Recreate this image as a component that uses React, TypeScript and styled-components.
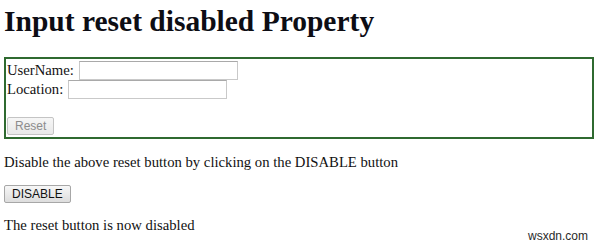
import React from "react";
import styled, { createGlobalStyle } from "styled-components";

const Global = createGlobalStyle`
  html, body { margin: 0; padding: 0; background: #ffffff; }
  body { font-family: "Liberation Serif", "Times New Roman", serif; color: #111111; }
`;

const Page = styled.div`
  position: relative;
  width: 600px;
  height: 246px;
  box-sizing: border-box;
  padding: 4px 6px 0 4px;
  overflow: hidden;
`;

const Heading = styled.h1`
  margin: 0 0 19px 0;
  font-size: 29.5px;
  line-height: 34px;
  font-weight: bold;
  color: #0d0d14;
`;

const FormBox = styled.form`
  margin: 0;
  border: 2px solid #2f6a30;
  padding: 2px 1px;
  display: flex;
  flex-direction: column;
  align-items: flex-start;
`;

const Row = styled.div`
  display: flex;
  align-items: center;
  height: 19px;
  font-size: 14.7px;
  line-height: 17px;
`;

const Label = styled.label`
  margin-right: 5px;
`;

const TextInput = styled.input`
  box-sizing: border-box;
  width: 159px;
  height: 19px;
  margin: 0;
  padding: 0 2px;
  border: 1px solid #c9c9c9;
  border-top-color: #a9a9a9;
  background: #ffffff;
  font: 13px "Liberation Sans", Arial, sans-serif;
`;

const Spacer = styled.div`
  height: 18px;
`;

const Button = styled.button<{ $off?: boolean }>`
  box-sizing: border-box;
  height: 18px;
  margin: 0;
  padding: 0 7px;
  font-family: "Liberation Sans", Arial, sans-serif;
  font-size: 12px;
  line-height: 16px;
  border-radius: 2px;
  border: 1px solid ${(p) => (p.$off ? "#c4c4c4" : "#a7a7a7")};
  color: ${(p) => (p.$off ? "#8c8c8c" : "#111111")};
  background: ${(p) =>
    p.$off
      ? "linear-gradient(#f6f6f6, #e9e9e9)"
      : "linear-gradient(#f7f7f7, #dddddd)"};
`;

const Para = styled.p<{ $top: number }>`
  margin: ${(p) => p.$top}px 0 0 0;
  font-size: 14.7px;
  line-height: 17px;
`;

const ButtonLine = styled.div`
  margin-top: 14px;
  display: flex;
`;

const Watermark = styled.div`
  position: absolute;
  right: 12px;
  top: 229px;
  font-family: "Liberation Sans", Arial, sans-serif;
  font-size: 12px;
  color: #2a2a2a;
`;

export default function App() {
  return (
    <Page>
      <Global />
      <Heading>Input reset disabled Property</Heading>
      <FormBox onSubmit={(e) => e.preventDefault()}>
        <Row>
          <Label>UserName:</Label>
          <TextInput type="text" />
        </Row>
        <Row>
          <Label>Location:</Label>
          <TextInput type="text" />
        </Row>
        <Spacer />
        <Button type="reset" $off disabled>
          Reset
        </Button>
      </FormBox>
      <Para $top={15}>Disable the above reset button by clicking on the DISABLE button</Para>
      <ButtonLine>
        <Button type="button">DISABLE</Button>
      </ButtonLine>
      <Para $top={14}>The reset button is now disabled</Para>
      <Watermark>wsxdn.com</Watermark>
    </Page>
  );
}
